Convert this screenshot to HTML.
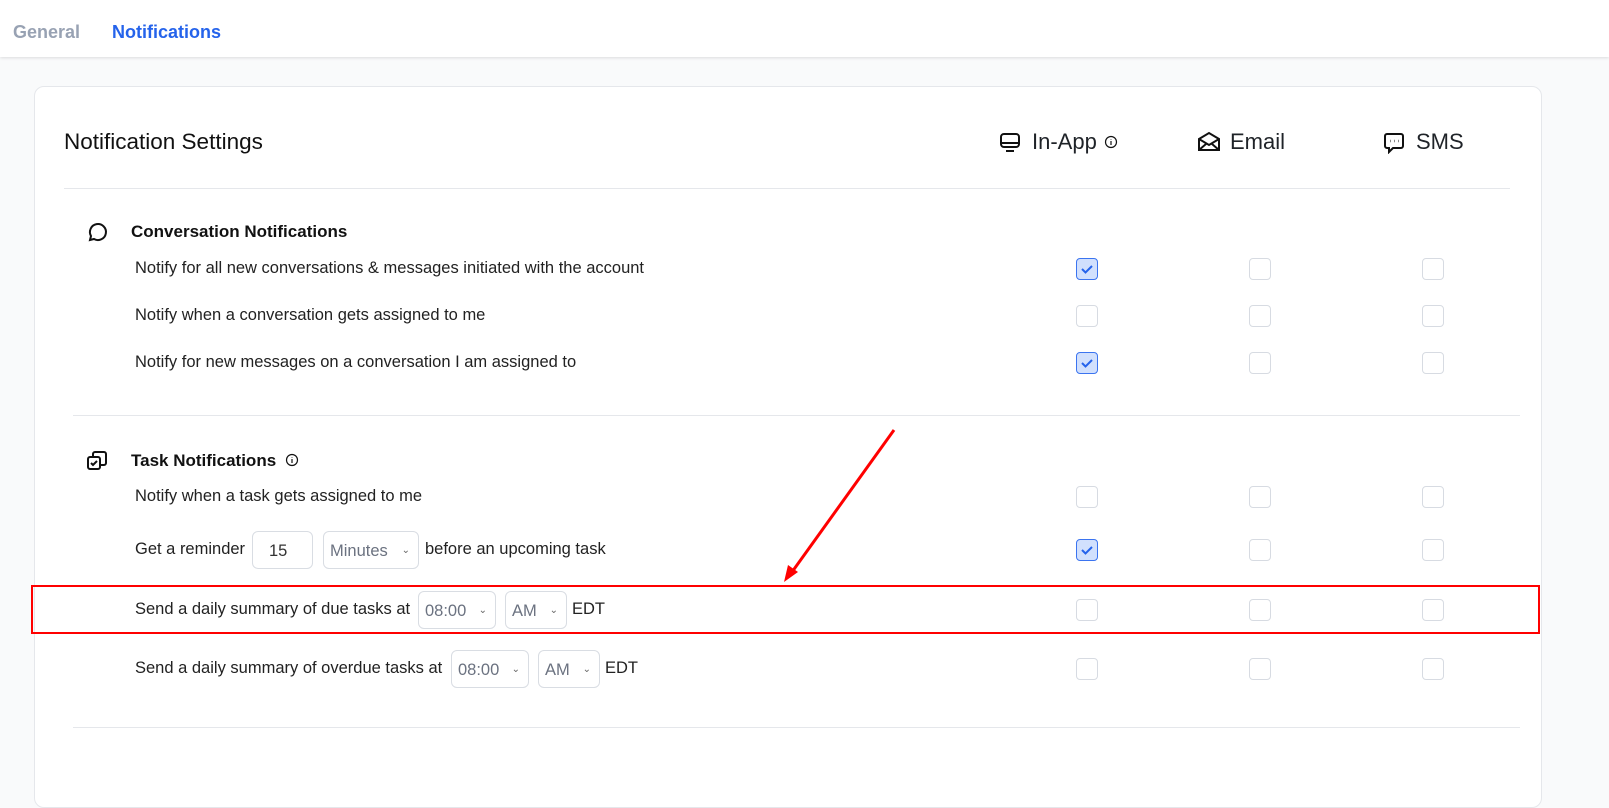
<!DOCTYPE html><html><head><style>
body{margin:0;width:1609px;height:777px;background:#f9fafb;font-family:"Liberation Sans",sans-serif;position:relative;overflow:hidden;color:#1f2328}
.a{position:absolute;white-space:nowrap}
.hdr{position:absolute;left:0;top:0;width:1609px;height:57px;background:#fff;box-shadow:0 1px 3px rgba(0,0,0,.12)}
.card{position:absolute;left:34px;top:86px;width:1506px;height:720px;background:#fff;border:1px solid #e5e7eb;border-radius:10px}
.cb{position:absolute;width:20px;height:20px;border:1px solid #d7dbe2;border-radius:4px;background:#fff}
.cb.on{background:#d1e0fd;border-color:#3b74f0}
.lbl{font-size:16.5px;color:#222}
.sel{position:absolute;border:1px solid #d9dde3;border-radius:6px;height:38px;font-size:16.5px;color:#6b7280;line-height:38px;box-sizing:border-box;padding-left:6px}
.sel i{position:absolute;right:8px;top:0;font-style:normal;font-size:10px;color:#666}
.hr{position:absolute;height:1px;background:#e5e7eb}
</style></head><body>
<div class="hdr"></div>
<div class="a" style="left:13px;top:22px;font-size:18px;font-weight:bold;color:#98a2b3">General</div>
<div class="a" style="left:112px;top:22px;font-size:18px;font-weight:bold;color:#2563eb">Notifications</div>
<div class="card"></div>
<div class="a" style="left:64px;top:129px;font-size:22.5px;color:#111">Notification Settings</div>
<svg class="a" style="left:999px;top:132px" width="22" height="22" viewBox="0 0 22 22" fill="none" stroke="#111" stroke-width="2"><rect x="2" y="2" width="18" height="13" rx="3"/><path d="M2 11h18M7 19h8"/></svg>
<div class="a" style="left:1032px;top:129px;font-size:22px">In-App</div>
<svg class="a" style="left:1104px;top:135px" width="14" height="14" viewBox="0 0 14 14" fill="none" stroke="#111" stroke-width="1.2"><circle cx="7" cy="7" r="5.5"/><path d="M7 6v4M7 4v.5"/></svg>
<svg class="a" style="left:1197px;top:131px" width="24" height="22" viewBox="0 0 24 22" fill="none" stroke="#111" stroke-width="2"><path d="M2 8L12 2l10 6v11H2zM2 8l10 6 10-6M2 19l7-6M22 19l-7-6"/></svg>
<div class="a" style="left:1230px;top:129px;font-size:22px">Email</div>
<svg class="a" style="left:1383px;top:132px" width="22" height="22" viewBox="0 0 22 22" fill="none" stroke="#111" stroke-width="2"><path d="M4 2h14a2 2 0 0 1 2 2v10a2 2 0 0 1-2 2H10l-4 4v-4H4a2 2 0 0 1-2-2V4a2 2 0 0 1 2-2z"/><path d="M7 9h.5M11 9h.5M15 9h.5" stroke-width="2.4"/></svg>
<div class="a" style="left:1416px;top:129px;font-size:22px">SMS</div>
<div class="hr" style="left:64px;top:188px;width:1446px"></div>
<svg class="a" style="left:86px;top:221px" width="22" height="22" viewBox="0 0 22 22" fill="none" stroke="#111" stroke-width="2"><path d="M4 19l1-4a8 8 0 1 1 3 3z"/></svg>
<div class="a" style="left:131px;top:222px;font-size:17px;font-weight:bold;color:#111">Conversation Notifications</div>
<div class="a lbl" style="left:135px;top:259px">Notify for all new conversations &amp; messages initiated with the account</div>
<div class="a lbl" style="left:135px;top:306px">Notify when a conversation gets assigned to me</div>
<div class="a lbl" style="left:135px;top:353px">Notify for new messages on a conversation I am assigned to</div>
<div class="hr" style="left:73px;top:415px;width:1447px"></div>
<svg class="a" style="left:86px;top:450px" width="22" height="22" viewBox="0 0 22 22" fill="none" stroke="#111" stroke-width="2"><rect x="2" y="7" width="12" height="12" rx="2"/><path d="M7 7V4a2 2 0 0 1 2-2h9a2 2 0 0 1 2 2v9a2 2 0 0 1-2 2h-4M5 13l2 2 4-4"/></svg>
<div class="a" style="left:131px;top:451px;font-size:17px;font-weight:bold;color:#111">Task Notifications</div>
<svg class="a" style="left:285px;top:453px" width="14" height="14" viewBox="0 0 14 14" fill="none" stroke="#111" stroke-width="1.2"><circle cx="7" cy="7" r="5.5"/><path d="M7 6v4M7 4v.5"/></svg>
<div class="a lbl" style="left:135px;top:487px">Notify when a task gets assigned to me</div>
<div class="a lbl" style="left:135px;top:540px">Get a reminder</div>
<div class="sel" style="left:252px;top:531px;width:61px;color:#333;padding-left:16px">15</div>
<div class="sel" style="left:323px;top:531px;width:96px">Minutes<i>&#8964;</i></div>
<div class="a lbl" style="left:425px;top:540px">before an upcoming task</div>
<div class="a lbl" style="left:135px;top:600px">Send a daily summary of due tasks at</div>
<div class="sel" style="left:418px;top:591px;width:78px">08:00<i>&#8964;</i></div>
<div class="sel" style="left:505px;top:591px;width:62px">AM<i>&#8964;</i></div>
<div class="a lbl" style="left:572px;top:600px">EDT</div>
<div class="a lbl" style="left:135px;top:659px">Send a daily summary of overdue tasks at</div>
<div class="sel" style="left:451px;top:650px;width:78px">08:00<i>&#8964;</i></div>
<div class="sel" style="left:538px;top:650px;width:62px">AM<i>&#8964;</i></div>
<div class="a lbl" style="left:605px;top:659px">EDT</div>
<div class="hr" style="left:73px;top:727px;width:1447px"></div>
<div style="position:absolute;left:31px;top:585px;width:1505px;height:45px;border:2px solid #f00"></div>
<svg class="a" style="left:0;top:0" width="1609" height="777"><line x1="894" y1="430" x2="792" y2="572" stroke="#f00" stroke-width="3"/><path d="M784 582l4-17 10 7z" fill="#f00"/></svg>
<div id="cbs"></div>
<script>
var rows=[269,316,363,497,550,610,669],cols=[1087,1260,1433],on={"0-0":1,"2-0":1,"4-0":1},h="";
rows.forEach(function(y,r){cols.forEach(function(x,c){var o=on[r+"-"+c];h+='<div class="cb'+(o?' on':'')+'" style="left:'+(x-11)+'px;top:'+(y-11)+'px">'+(o?'<svg width="20" height="20" viewBox="0 0 20 20"><path d="M5 10l3.5 3.5L15 7" fill="none" stroke="#2563eb" stroke-width="2"/></svg>':'')+'</div>'})});
document.getElementById("cbs").innerHTML=h;
</script>
</body></html>
